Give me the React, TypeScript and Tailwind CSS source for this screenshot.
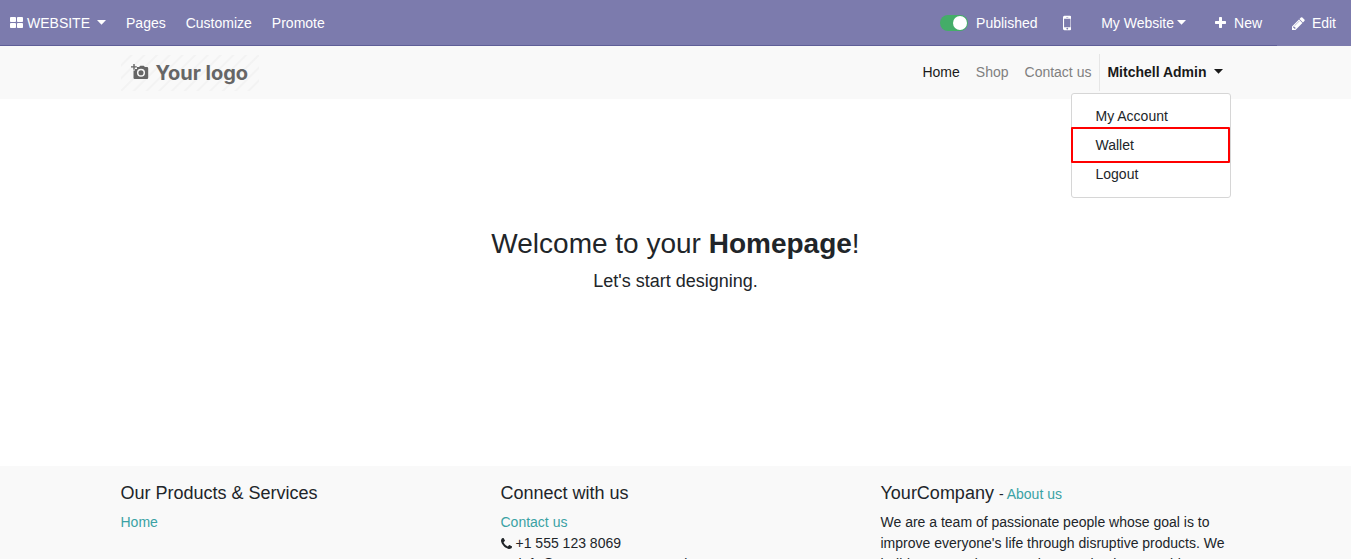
import type { ReactNode } from 'react';

const ICONS = {
  thLarge: {
    box: '64 0 1664 1792',
    d: 'M832 1024v384q0 52-38 90t-90 38h-512q-52 0-90-38t-38-90v-384q0-52 38-90t90-38h512q52 0 90 38t38 90zm0-768v384q0 52-38 90t-90 38h-512q-52 0-90-38t-38-90v-384q0-52 38-90t90-38h512q52 0 90 38t38 90zm896 768v384q0 52-38 90t-90 38h-512q-52 0-90-38t-38-90v-384q0-52 38-90t90-38h512q52 0 90 38t38 90zm0-768v384q0 52-38 90t-90 38h-512q-52 0-90-38t-38-90v-384q0-52 38-90t90-38h512q52 0 90 38t38 90z',
  },
  mobile: {
    box: '512 0 768 1792',
    d: 'M976 1408q0-33-23.5-56.5t-56.5-23.5-56.5 23.5-23.5 56.5 23.5 56.5 56.5 23.5 56.5-23.5 23.5-56.5zm208-160v-704q0-13-9.5-22.5t-22.5-9.5h-512q-13 0-22.5 9.5t-9.5 22.5v704q0 13 9.5 22.5t22.5 9.5h512q13 0 22.5-9.5t9.5-22.5zm-192-848q0-16-16-16h-160q-16 0-16 16t16 16h160q16 0 16-16zm288-16v1024q0 52-38 90t-90 38h-512q-52 0-90-38t-38-90v-1024q0-52 38-90t90-38h512q52 0 90 38t38 90z',
  },
  plus: {
    box: '192 0 1408 1792',
    d: 'M1600 736v192q0 40-28 68t-68 28h-416v416q0 40-28 68t-68 28h-192q-40 0-68-28t-28-68v-416h-416q-40 0-68-28t-28-68v-192q0-40 28-68t68-28h416v-416q0-40 28-68t68-28h192q40 0 68 28t28 68v416h416q40 0 68 28t28 68z',
  },
  pencil: {
    box: '128 0 1536 1792',
    d: 'M491 1536l91-91-235-235-91 91v107h128v128h107zm523-928q0-22-22-22-10 0-17 7l-542 542q-7 7-7 17 0 22 22 22 10 0 17-7l542-542q7-7 7-17zm-54-192l416 416-832 832h-416v-416zm683 96q0 53-37 90l-166 166-416-416 166-165q36-38 90-38 53 0 91 38l235 234q37 39 37 91z',
  },
  phone: {
    box: '192 0 1408 1792',
    d: 'M1600 1240q0 27-10 70.5t-21 68.5q-21 50-122 106-94 51-186 51-27 0-53-3.5t-57.5-12.5-47-14.5-55.5-20.5-49-18q-98-35-175-83-127-79-264-216t-216-264q-48-77-83-175-3-9-18-49t-20.5-55.5-14.5-47-12.5-57.5-3.5-53q0-92 51-186 56-101 106-122 25-11 68.5-21t70.5-10q14 0 21 3 18 6 53 76 11 19 30 54t35 63.5 31 53.5q3 4 17.5 25t21.5 35.5 7 28.5q0 20-28.5 50t-62 55-62 53-28.5 46q0 9 5 22.5t8.5 20.5 14 24 11.5 19q76 137 174 235t235 174q2 1 19 11.5t24 14 20.5 8.5 22.5 5q18 0 46-28.5t53-62 55-62 50-28.5q14 0 28.5 7t35.5 21.5 25 17.5q25 15 53.5 31t63.5 35 54 30q70 35 76 53 3 7 3 21z',
  },
  envelope: {
    box: '0 0 1792 1792',
    d: 'M1792 710v794q0 66-47 113t-113 47h-1472q-66 0-113-47t-47-113v-794q44 49 101 87 362 246 497 345 57 42 92.500 65.500t94.500 48 110 24.500h2q51 0 110-24.500t94.500-48 92.500-65.500q170-123 498-345 57-39 100-87zm0-294q0 79-49 151t-122 123q-376 261-468 325-10 7-42.500 31t-54 38-52 32.500-57.500 27-50 9h-2q-23 0-50-9t-57.500-27-52-32.500-54-38-42.500-31q-91-64-262-182.500t-205-142.500q-62-42-117-115.500t-55-136.500q0-78 41.500-130t118.500-52h1472q65 0 112.500 47t47.500 113z',
  },
};

function Icon({ name, className = 'h-3.5' }: { name: keyof typeof ICONS; className?: string }) {
  return (
    <svg viewBox={ICONS[name].box} fill="currentColor" aria-hidden="true" className={`w-auto shrink-0 ${className}`}>
      <path d={ICONS[name].d} />
    </svg>
  );
}

function Caret({ className = '' }: { className?: string }) {
  return (
    <svg viewBox="0 0 9 5" fill="currentColor" aria-hidden="true" className={`mb-0.5 h-[5px] w-[9px] shrink-0 ${className}`}>
      <path d="M0 0h9L4.500 4.700z" />
    </svg>
  );
}

function TopBar() {
  return (
    <header className="flex h-[46px] shrink-0 items-stretch justify-between bg-[#7c7bad] text-white">
      <nav aria-label="Website editor" className="flex flex-1 items-center gap-5 border-b border-[#5f5e97] pt-px pl-2.5">
        <button type="button" className="flex items-center">
          <Icon name="thLarge" className="mr-1 h-3.5" />
          WEBSITE
          <Caret className="ml-[7px]" />
        </button>
        <button type="button">Pages</button>
        <button type="button">Customize</button>
        <button type="button">Promote</button>
      </nav>
      <div className="flex items-center border-b border-[#5f5e97] pt-px">
        <label className="flex items-center gap-2">
          <span className="relative flex h-4 w-7">
            <input type="checkbox" defaultChecked className="peer h-4 w-7 appearance-none rounded-full bg-[#a0a0b0] checked:bg-[#44ad68]" />
            <span className="pointer-events-none absolute top-px left-px size-3.5 rounded-full bg-white peer-checked:left-[13px]" />
          </span>
          Published
        </label>
        <button type="button" aria-label="Mobile preview" className="ml-[25px]">
          <Icon name="mobile" className="h-5" />
        </button>
        <button type="button" className="ml-[30px] flex items-center">
          My Website
          <Caret className="ml-[3px]" />
        </button>
        <button type="button" className="ml-[29px] flex items-center gap-2 pr-[15px]">
          <Icon name="plus" />
          New
        </button>
      </div>
      <button type="button" className="flex items-center gap-[7px] px-[15px]">
        <Icon name="pencil" className="h-[15px]" />
        Edit
      </button>
    </header>
  );
}

function Logo() {
  return (
    <a
      href="#home"
      className="flex h-9 w-[138px] items-center bg-[repeating-linear-gradient(135deg,#f9f9f9_0px,#f9f9f9_6px,#f3f3f3_7px,#f3f3f3_8px,#f9f9f9_9px)] pl-2.5 font-[Inter,sans-serif] text-[20px] leading-6 font-bold text-[#666]"
    >
      <svg viewBox="0 0 18 16" aria-hidden="true" className="mr-[7px] mb-px h-4 w-[18px] shrink-0">
        <path fill="currentColor" d="M6 5V3h2l1.300-1.200h3.400L14 3h2q1.200 0 1.200 1.200v9.600Q17.200 15 16 15H3.700q-1.200 0-1.200-1.200V6.500H4V5z" />
        <path stroke="currentColor" strokeWidth="1.400" d="M3 0v5.800M0 2.900h5.800" />
        <circle cx="10" cy="8.800" r="3.300" fill="none" stroke="#f9f9f9" strokeWidth="1.500" />
      </svg>
      Your logo
    </a>
  );
}

function UserMenu() {
  return (
    <div className="relative flex h-[37px] items-center border-l border-[#e6e6e6] pr-2 pl-[7px]">
      <button type="button" aria-expanded="true" className="flex items-center font-bold text-[#1a1a1a]">
        Mitchell Admin
        <Caret className="ml-[7px]" />
      </button>
      <ul className="absolute top-[39px] right-0 z-10 w-40 rounded-[3px] border border-[#d6d6d6] bg-white py-2 text-[#212529]">
        <li>
          <a href="#account" className="block px-6 py-1">My Account</a>
        </li>
        <li className="relative">
          <a href="#wallet" className="block px-6 py-1">Wallet</a>
          <span className="pointer-events-none absolute -top-1 right-0 -bottom-[3px] -left-px rounded-[1px] border-2 border-[#f00]" />
        </li>
        <li>
          <a href="#logout" className="block px-6 py-1">Logout</a>
        </li>
      </ul>
    </div>
  );
}

function SiteHeader() {
  return (
    <div className="bg-[#f9f9f9]">
      <div className="mx-auto flex max-w-[1140px] items-center justify-between px-[15px] py-2">
        <Logo />
        <nav aria-label="Main" className="flex items-center text-[#808080]">
          <a href="#home" className="px-2 text-[#1a1a1a]">Home</a>
          <a href="#shop" className="px-2">Shop</a>
          <a href="#contact" className="px-2">Contact us</a>
          <UserMenu />
        </nav>
      </div>
    </div>
  );
}

function FooterColumn({ title, children }: { title: ReactNode; children: ReactNode }) {
  return (
    <section>
      <h2 className="mb-2 text-[18px] leading-[22px]">{title}</h2>
      {children}
    </section>
  );
}

function Footer() {
  return (
    <footer className="bg-[#f9f9f9]">
      <div className="mx-auto grid max-w-[1140px] grid-cols-3 gap-[30px] px-[15px] py-4">
        <FooterColumn title="Our Products &amp; Services">
          <a href="#home" className="text-[#3aa2a4]">Home</a>
        </FooterColumn>
        <FooterColumn title="Connect with us">
          <ul>
            <li>
              <a href="#contact" className="text-[#3aa2a4]">Contact us</a>
            </li>
            <li className="flex items-center gap-1">
              <Icon name="phone" />
              +1 555 123 8069
            </li>
            <li className="flex items-center gap-1">
              <Icon name="envelope" />
              info@yourcompany.example.com
            </li>
          </ul>
        </FooterColumn>
        <FooterColumn
          title={
            <>
              YourCompany <small className="text-sm leading-none">- <a href="#about" className="text-[#3aa2a4]">About us</a></small>
            </>
          }
        >
          <p>
            We are a team of passionate people whose goal is to improve everyone's life through disruptive products. We
            build great products to solve your business problems.
          </p>
        </FooterColumn>
      </div>
    </footer>
  );
}

export default function App() {
  return (
    <div className="flex h-screen flex-col bg-white font-['Liberation_Sans',Arial,sans-serif] text-[14px] leading-[21px] text-[#212529]">
      <TopBar />
      <div className="flex-1 overflow-y-auto [scrollbar-width:none]">
        <SiteHeader />
        <main className="px-4 pt-32 pb-[173px] text-center">
          <h1 className="mb-2 text-[28px] leading-[34px]">
            Welcome to your <b>Homepage</b>!
          </h1>
          <p className="text-[18px] leading-6">Let's start designing.</p>
        </main>
        <Footer />
      </div>
    </div>
  );
}
